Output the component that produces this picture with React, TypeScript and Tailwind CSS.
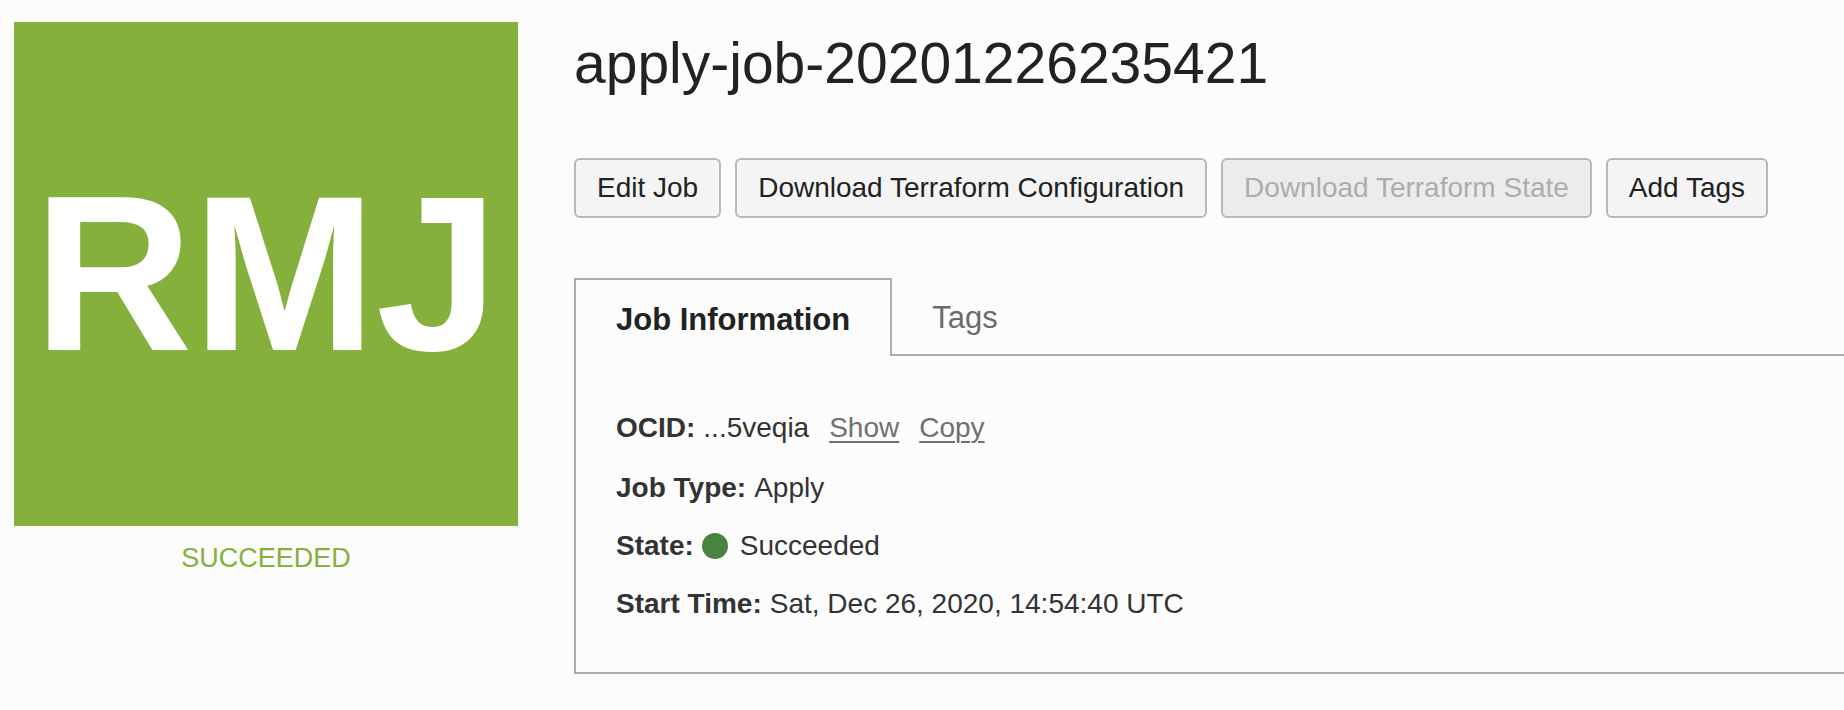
import React, { useState } from "react";

type Action = { label: string; disabled?: boolean };

const actions: Action[] = [
  { label: "Edit Job" },
  { label: "Download Terraform Configuration" },
  { label: "Download Terraform State", disabled: true },
  { label: "Add Tags" },
];

const tabs = ["Job Information", "Tags"];

function Field({ label, children }: { label: string; children: React.ReactNode }) {
  return (
    <div className="flex items-baseline gap-2">
      <dt className="font-bold">{label}:</dt>
      <dd className="flex items-baseline">{children}</dd>
    </div>
  );
}

export default function App() {
  const [active, setActive] = useState(tabs[0]);

  return (
    <main className="flex min-h-screen items-start gap-14 overflow-x-hidden bg-[#fcfcfc] pt-[22px] pl-[14px] font-['Liberation_Sans',Arial,sans-serif] text-[28px] leading-8 text-[#333333]">
      <aside className="flex w-[504px] shrink-0 flex-col items-center gap-4">
        <div className="flex aspect-square w-full items-center justify-center bg-[#84b03b] text-[220px] leading-none font-bold text-white">
          RMJ
        </div>
        <p className="text-[27px] text-[#84b03b]">SUCCEEDED</p>
      </aside>

      <section className="min-w-0 flex-1">
        <h1 className="pt-2 text-[57px] leading-[66px] text-[#222222]">apply-job-20201226235421</h1>

        <div className="mt-[62px] flex flex-wrap gap-[14px]">
          {actions.map((action) => (
            <button
              key={action.label}
              type="button"
              disabled={action.disabled}
              className="h-[60px] rounded-md border-2 border-[#b4b8bf] bg-[#f4f4f4] px-[21px] whitespace-nowrap text-[#222222] disabled:bg-[#ececec] disabled:text-[#adadad]"
            >
              {action.label}
            </button>
          ))}
        </div>

        <div role="tablist" className="mt-[60px] flex h-[78px] text-[31px] leading-9">
          {tabs.map((tab) => (
            <button
              key={tab}
              type="button"
              role="tab"
              aria-selected={active === tab}
              onClick={() => setActive(tab)}
              className="border-b-2 border-[#adadad] px-10 pt-1 text-[#6b6b6b] aria-selected:border-x-2 aria-selected:border-t-2 aria-selected:border-b-0 aria-selected:font-bold aria-selected:text-[#222222]"
            >
              {tab}
            </button>
          ))}
          <div className="flex-1 border-b-2 border-[#adadad]" />
        </div>

        <dl className="flex flex-col gap-[26px] border-b-2 border-l-2 border-[#adadad] px-10 pt-[56px] pb-[52px]">
          <div className="pb-0.5">
            <Field label="OCID">
              <span>...5veqia</span>
              <a href="#show" className="ml-5 text-[#707070] underline decoration-2 underline-offset-4">
                Show
              </a>
              <a href="#copy" className="ml-5 text-[#707070] underline decoration-2 underline-offset-4">
                Copy
              </a>
            </Field>
          </div>
          <Field label="Job Type">Apply</Field>
          <Field label="State">
            <span className="mr-3 size-[26px] self-center rounded-full bg-[#4a8341]" />
            Succeeded
          </Field>
          <Field label="Start Time">Sat, Dec 26, 2020, 14:54:40 UTC</Field>
        </dl>
      </section>
    </main>
  );
}
